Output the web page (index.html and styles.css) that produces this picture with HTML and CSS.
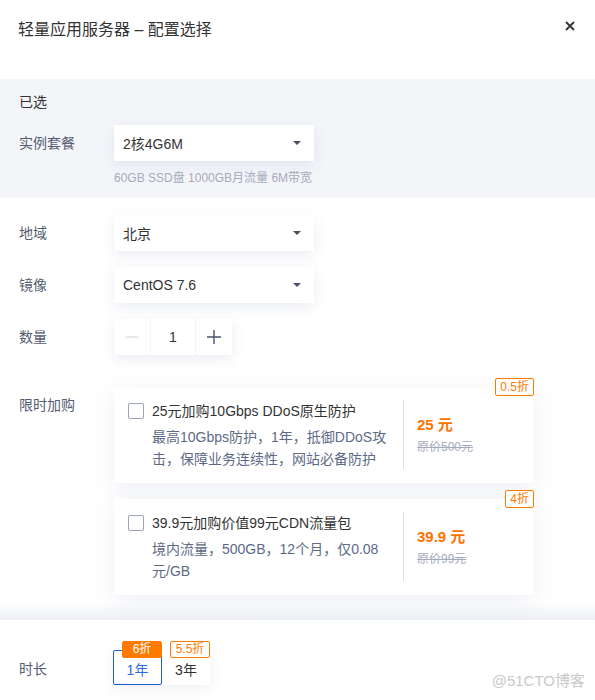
FILE: index.html
```html
<!DOCTYPE html>
<html lang="zh">
<head>
<meta charset="utf-8">
<link rel="stylesheet" href="styles.css">
</head>
<body>
<div class="dialog">
  <header class="head">
    <h1 class="title">轻量应用服务器 – 配置选择</h1>
    <svg class="close" width="10" height="10" viewBox="0 0 10 10"><path d="M1 1L9 9M9 1L1 9" stroke="#333" stroke-width="1.8"/></svg>
  </header>

  <section class="chosen">
    <div class="chosen-title">已选</div>
    <div class="row">
      <div class="label">实例套餐</div>
      <div class="select"><span>2核4G6M</span><i class="caret"></i></div>
    </div>
    <div class="spec">60GB SSD盘 1000GB月流量 6M带宽</div>
  </section>

  <section class="config">
    <div class="row">
      <div class="label">地域</div>
      <div class="select"><span>北京</span><i class="caret"></i></div>
    </div>
    <div class="row">
      <div class="label">镜像</div>
      <div class="select"><span>CentOS 7.6</span><i class="caret"></i></div>
    </div>
    <div class="row">
      <div class="label">数量</div>
      <div class="stepper">
        <div class="step minus">
          <svg width="12" height="12" viewBox="0 0 12 12"><path d="M0 6H12" stroke="#d4d7de" stroke-width="1.2"/></svg>
        </div>
        <div class="step num">1</div>
        <div class="step plus">
          <svg width="14" height="14" viewBox="0 0 14 14"><path d="M0 7H14M7 0V14" stroke="#4b5568" stroke-width="1.4"/></svg>
        </div>
      </div>
    </div>
    <div class="row addon-row">
      <div class="label addon-label">限时加购</div>
      <div class="cards">
        <div class="card">
          <span class="badge">0.5折</span>
          <i class="check"></i>
          <div class="card-body">
            <div class="card-title">25元加购10Gbps DDoS原生防护</div>
            <div class="card-desc">最高10Gbps防护，1年，抵御DDoS攻<br>击，保障业务连续性，网站必备防护</div>
          </div>
          <div class="card-price">
            <div class="price">25 元</div>
            <div class="orig">原价500元</div>
          </div>
        </div>
        <div class="card">
          <span class="badge">4折</span>
          <i class="check"></i>
          <div class="card-body">
            <div class="card-title">39.9元加购价值99元CDN流量包</div>
            <div class="card-desc">境内流量，500GB，12个月，仅0.08<br>元/GB</div>
          </div>
          <div class="card-price">
            <div class="price">39.9 元</div>
            <div class="orig">原价99元</div>
          </div>
        </div>
      </div>
    </div>
  </section>
  <div class="shade"></div>

  <section class="footer">
    <div class="row">
      <div class="label">时长</div>
      <div class="tabs">
        <div class="tab active"><span class="tag solid">6折</span>1年</div>
        <div class="tab"><span class="tag">5.5折</span>3年</div>
      </div>
    </div>
  </section>
  <div class="watermark">@51CTO博客</div>
</div>
</body>
</html>
```

FILE: styles.css
```css
* { box-sizing: border-box; }
html, body { margin: 0; padding: 0; background: #fff; }
body {
  font-family: "Liberation Sans", "Noto Sans CJK SC", sans-serif;
  font-size: 14px;
  color: #333;
  width: 595px;
  height: 700px;
  overflow: hidden;
}
.dialog { position: relative; height: 700px; }

.head {
  height: 79px;
  display: flex;
  justify-content: space-between;
  align-items: flex-start;
  padding: 19px 20px 0 18px;
}
.title {
  margin: 0;
  font-size: 16px;
  font-weight: normal;
  line-height: 22px;
  color: #333;
}
.close { margin-top: 2px; }

.chosen {
  background: #f3f5f9;
  padding: 13px 19px 12px;
}
.chosen-title { line-height: 20px; color: #333; margin-bottom: 13px; }
.spec {
  margin: 9px 0 0 95px;
  font-size: 12px;
  line-height: 16px;
  color: #a4abbb;
}

.row { display: flex; align-items: center; }
.label { width: 95px; flex: none; color: #555d70; line-height: 20px; }

.select {
  width: 200px;
  height: 36px;
  background: #fff;
  display: flex;
  align-items: center;
  justify-content: space-between;
  padding: 0 13px 0 9px;
  box-shadow: 0 4px 14px rgba(60, 80, 140, 0.1);
  color: #333;
}
.caret {
  width: 0; height: 0;
  border-left: 4px solid transparent;
  border-right: 4px solid transparent;
  border-top: 4px solid #4a5060;
}

.config { padding: 17px 19px 8px; display: flex; flex-direction: column; gap: 16px; }

.stepper { display: flex; height: 36px; box-shadow: 0 4px 14px rgba(60, 80, 140, 0.1); background: #fff; }
.step { display: flex; align-items: center; justify-content: center; }
.minus, .plus { width: 36px; }
.num { width: 46px; border-left: 1px solid #f4f5f8; border-right: 1px solid #f4f5f8; color: #333; }

.addon-row { align-items: flex-start; margin-top: 16px; }
.addon-label { padding-top: 8px; }
.cards { display: flex; flex-direction: column; gap: 16px; }
.card {
  position: relative;
  width: 420px;
  height: 96px;
  background: #fff;
  display: flex;
  align-items: flex-start;
  padding: 14px 0 0 14px;
  box-shadow: 0 6px 24px rgba(60, 80, 140, 0.09);
}
.badge {
  position: absolute;
  top: -9px;
  right: 0;
  height: 18px;
  line-height: 16px;
  padding: 0 4px;
  font-size: 12px;
  color: #ff7a00;
  border: 1px solid #ff7a00;
  border-radius: 2px;
  background: #fff;
}
.check {
  width: 16px; height: 16px;
  border: 1px solid #9aa3b5;
  border-radius: 2px;
  margin-top: 2px;
  flex: none;
}
.card-body { width: 251px; margin-left: 8px; flex: none; }
.card-title { line-height: 20px; color: #333; }
.card-desc { margin-top: 5px; line-height: 22px; color: #5d6a86; }
.card-price {
  margin-top: -1px;
  border-left: 1px solid #d9dde5;
  height: 69px;
  padding: 15px 0 0 13px;
}
.price { font-size: 15px; font-weight: bold; color: #ff7200; line-height: 20px; }
.orig { margin-top: 4px; font-size: 12px; color: #a4abbb; text-decoration: line-through; line-height: 16px; }

.shade { height: 17px; background: linear-gradient(to bottom, rgba(236, 239, 245, 0), #eceff5); }

.footer { padding: 30px 18px 0 19px; }
.footer .row { align-items: center; }
.footer .label { margin-top: 2px; width: 94px; }
.tabs { display: flex; box-shadow: 0 4px 14px rgba(60, 80, 140, 0.08); }
.tab {
  position: relative;
  width: 48px;
  height: 35px;
  background: #fff;
  display: flex;
  align-items: center;
  justify-content: center;
  padding-top: 2px;
  color: #333;
}
.tab.active { width: 49px; border: 1px solid #1c5ccf; border-radius: 2px; color: #2b6de0; }
.tag {
  position: absolute;
  top: -9px;
  right: 0;
  width: 40px;
  height: 17px;
  line-height: 15px;
  text-align: center;
  font-size: 12px;
  color: #ff7a00;
  border: 1px solid #ff7a00;
  border-radius: 2px;
  background: #fff;
}
.tab.active .tag { right: -1px; top: -10px; }
.tag.solid { background: #ff7a00; color: #fff; }

.watermark {
  position: absolute;
  right: 10px;
  bottom: 10px;
  font-size: 15px;
  color: #c9c9c9;
}
```
